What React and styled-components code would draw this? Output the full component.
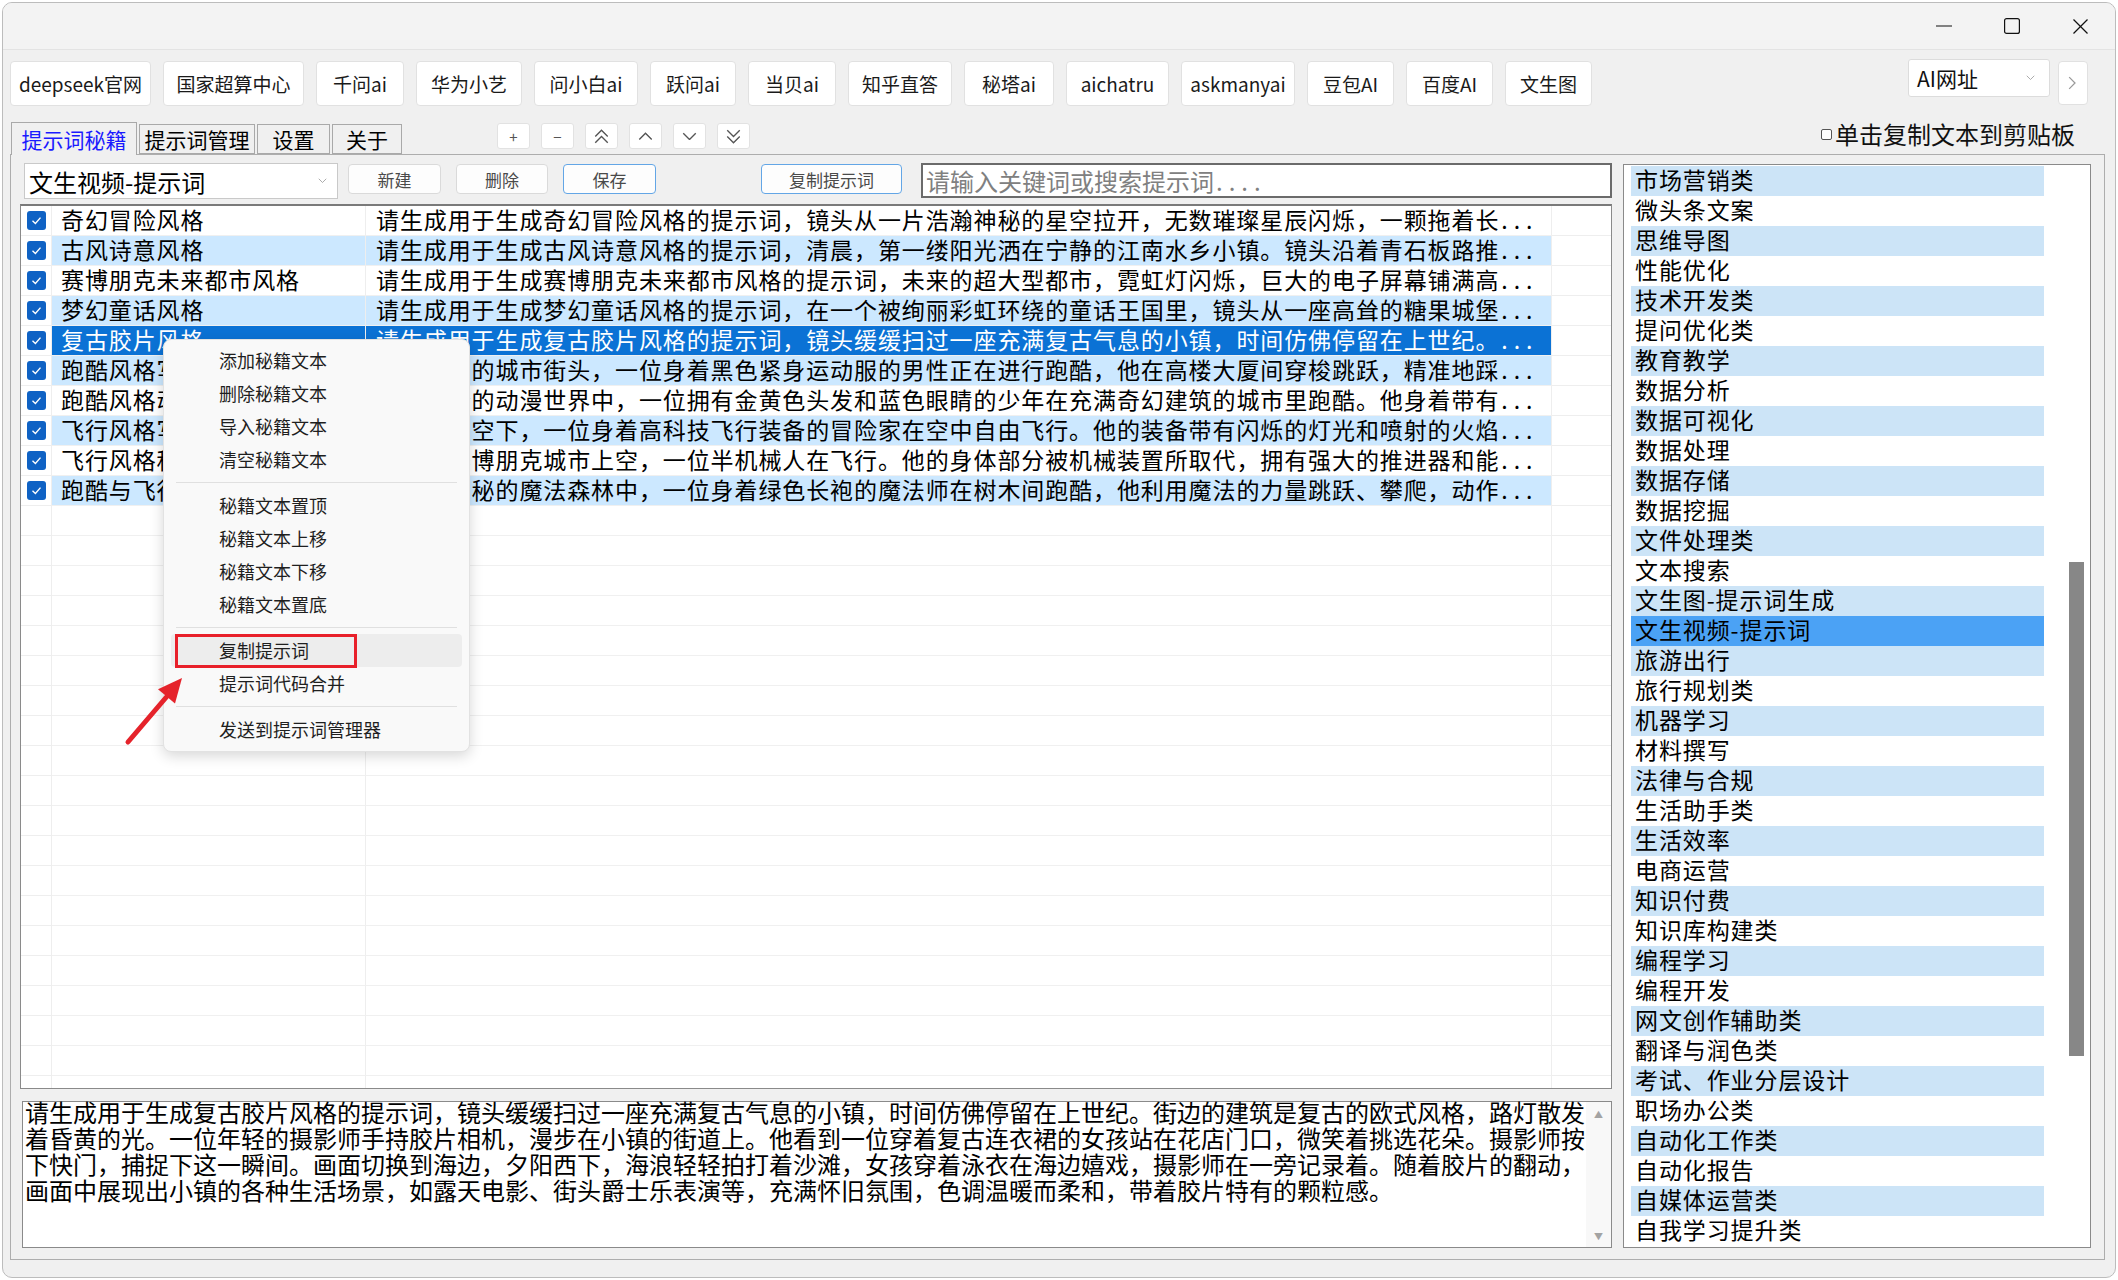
import React from "react";
import styled, { createGlobalStyle } from "styled-components";

const GlobalStyle = createGlobalStyle`
  html, body {
    margin: 0;
    padding: 0;
    background: #ffffff;
  }
  body {
    font-family: "Noto Sans CJK SC", "Noto Sans", "Liberation Sans", sans-serif;
    color: #000;
  }
  * {
    box-sizing: border-box;
  }
`;

const sites = [
  { label: "deepseek官网", w: 141 },
  { label: "国家超算中心", w: 141 },
  { label: "千问ai", w: 88 },
  { label: "华为小艺", w: 106 },
  { label: "问小白ai", w: 104 },
  { label: "跃问ai", w: 86 },
  { label: "当贝ai", w: 88 },
  { label: "知乎直答", w: 104 },
  { label: "秘塔ai", w: 90 },
  { label: "aichatru", w: 103 },
  { label: "askmanyai", w: 114 },
  { label: "豆包AI", w: 87 },
  { label: "百度AI", w: 87 },
  { label: "文生图", w: 87 }
];

const tabs = [
  { label: "提示词秘籍", width: 126, active: true },
  { label: "提示词管理", width: 116 },
  { label: "设置", width: 73 },
  { label: "关于", width: 70 }
];

const prompts = [
  ["奇幻冒险风格", "请生成用于生成奇幻冒险风格的提示词，镜头从一片浩瀚神秘的星空拉开，无数璀璨星辰闪烁，一颗拖着长"],
  ["古风诗意风格", "请生成用于生成古风诗意风格的提示词，清晨，第一缕阳光洒在宁静的江南水乡小镇。镜头沿着青石板路推"],
  ["赛博朋克未来都市风格", "请生成用于生成赛博朋克未来都市风格的提示词，未来的超大型都市，霓虹灯闪烁，巨大的电子屏幕铺满高"],
  ["梦幻童话风格", "请生成用于生成梦幻童话风格的提示词，在一个被绚丽彩虹环绕的童话王国里，镜头从一座高耸的糖果城堡"],
  ["复古胶片风格", "请生成用于生成复古胶片风格的提示词，镜头缓缓扫过一座充满复古气息的小镇，时间仿佛停留在上世纪。"],
  ["跑酷风格写实", "繁华喧嚣的城市街头，一位身着黑色紧身运动服的男性正在进行跑酷，他在高楼大厦间穿梭跳跃，精准地踩"],
  ["跑酷风格动漫", "色彩缤纷的动漫世界中，一位拥有金黄色头发和蓝色眼睛的少年在充满奇幻建筑的城市里跑酷。他身着带有"],
  ["飞行风格写实", "在蔚蓝天空下，一位身着高科技飞行装备的冒险家在空中自由飞行。他的装备带有闪烁的灯光和喷射的火焰"],
  ["飞行风格科幻", "在未来赛博朋克城市上空，一位半机械人在飞行。他的身体部分被机械装置所取代，拥有强大的推进器和能"],
  ["跑酷与飞行", "在一片神秘的魔法森林中，一位身着绿色长袍的魔法师在树木间跑酷，他利用魔法的力量跳跃、攀爬，动作"]
];

const SELECTED_ROW = 4;

const categories = [
  "市场营销类", "微头条文案", "思维导图", "性能优化", "技术开发类", "提问优化类",
  "教育教学", "数据分析", "数据可视化", "数据处理", "数据存储", "数据挖掘",
  "文件处理类", "文本搜索", "文生图-提示词生成", "文生视频-提示词", "旅游出行",
  "旅行规划类", "机器学习", "材料撰写", "法律与合规", "生活助手类", "生活效率",
  "电商运营", "知识付费", "知识库构建类", "编程学习", "编程开发", "网文创作辅助类",
  "翻译与润色类", "考试、作业分层设计", "职场办公类", "自动化工作类", "自动化报告",
  "自媒体运营类", "自我学习提升类"
];

const SELECTED_CATEGORY = 15;

const detailLines = [
  "请生成用于生成复古胶片风格的提示词，镜头缓缓扫过一座充满复古气息的小镇，时间仿佛停留在上世纪。街边的建筑是复古的欧式风格，路灯散发",
  "着昏黄的光。一位年轻的摄影师手持胶片相机，漫步在小镇的街道上。他看到一位穿着复古连衣裙的女孩站在花店门口，微笑着挑选花朵。摄影师按",
  "下快门，捕捉下这一瞬间。画面切换到海边，夕阳西下，海浪轻轻拍打着沙滩，女孩穿着泳衣在海边嬉戏，摄影师在一旁记录着。随着胶片的翻动，",
  "画面中展现出小镇的各种生活场景，如露天电影、街头爵士乐表演等，充满怀旧氛围，色调温暖而柔和，带着胶片特有的颗粒感。"
];

const menuGroups = [
  ["添加秘籍文本", "删除秘籍文本", "导入秘籍文本", "清空秘籍文本"],
  ["秘籍文本置顶", "秘籍文本上移", "秘籍文本下移", "秘籍文本置底"],
  ["复制提示词", "提示词代码合并"],
  ["发送到提示词管理器"]
];

const Chevron = ({ dir = "down", size = 10, color = "#8a8a8a", double }) => {
  const pts = dir === "up" ? "1,6 6,1 11,6" : dir === "down" ? "1,1 6,6 11,1" : "1,1 6,6 1,11";
  const w = dir === "right" ? 8 : 12;
  const h = dir === "right" ? 12 : double ? 12 : 7;
  return (
    <svg width={size * (w / 12)} height={size * (h / 12)} viewBox={`0 0 ${w} ${h}`}>
      <polyline points={pts} fill="none" stroke={color} strokeWidth="1.1" />
      {double && (
        <polyline
          points={dir === "up" ? "1,11 6,6 11,11" : "1,6 6,11 11,6"}
          fill="none"
          stroke={color}
          strokeWidth="1.1"
        />
      )}
    </svg>
  );
};

const App = () => {
  const emptyRows = Array.from({ length: 20 });
  return (
    <>
      <GlobalStyle />
      <Window>
        <TitleBar>
          <WinControl>
            <svg width="16" height="2" viewBox="0 0 16 2">
              <line x1="0" y1="1" x2="16" y2="1" stroke="#111" strokeWidth="1.2" />
            </svg>
          </WinControl>
          <WinControl>
            <svg width="16" height="16" viewBox="0 0 16 16">
              <rect x="0.6" y="0.6" width="14.8" height="14.8" rx="2" fill="none" stroke="#111" strokeWidth="1.2" />
            </svg>
          </WinControl>
          <WinControl>
            <svg width="15" height="15" viewBox="0 0 15 15">
              <line x1="0.5" y1="0.5" x2="14.5" y2="14.5" stroke="#111" strokeWidth="1.2" />
              <line x1="14.5" y1="0.5" x2="0.5" y2="14.5" stroke="#111" strokeWidth="1.2" />
            </svg>
          </WinControl>
        </TitleBar>

        <SiteBar>
          {sites.map((s) => (
            <SiteButton key={s.label} $w={s.w}>
              {s.label}
            </SiteButton>
          ))}
          <RightGroup>
            <AddrCombo>
              <span>AI网址</span>
              <Chevron dir="down" size={9} color="#9a9a9a" />
            </AddrCombo>
            <NextButton>
              <Chevron dir="right" size={14} color="#9a9a9a" />
            </NextButton>
          </RightGroup>
        </SiteBar>

        <TabRow>
          {tabs.map((t) => (
            <Tab key={t.label} $active={t.active} $width={t.width}>
              {t.label}
            </Tab>
          ))}
          <MiniGroup>
            <MiniButton>+</MiniButton>
            <MiniButton>−</MiniButton>
            <MiniButton>
              <Chevron dir="up" double size={15} color="#555" />
            </MiniButton>
            <MiniButton>
              <Chevron dir="up" size={15} color="#555" />
            </MiniButton>
            <MiniButton>
              <Chevron dir="down" size={15} color="#555" />
            </MiniButton>
            <MiniButton>
              <Chevron dir="down" double size={15} color="#555" />
            </MiniButton>
          </MiniGroup>
          <ClipCheck>
            <SmallBox />
            单击复制文本到剪贴板
          </ClipCheck>
        </TabRow>

        <Panel>
          <LeftColumn>
            <Toolbar>
              <GroupCombo>
                <span>文生视频-提示词</span>
                <Chevron dir="down" size={9} color="#9a9a9a" />
              </GroupCombo>
              <ToolButton $ml={10} $w={93}>新建</ToolButton>
              <ToolButton $ml={15} $w={92}>删除</ToolButton>
              <ToolButton $ml={15} $w={93} $focus>保存</ToolButton>
              <ToolButton $ml={105} $w={141} $focus>复制提示词</ToolButton>
              <SearchBox>
                请输入关键词或搜索提示词<Dots>....</Dots>
              </SearchBox>
            </Toolbar>

            <Table>
              {prompts.map(([title, text], i) => {
                const tone = i === SELECTED_ROW ? "selected" : i % 2 === 1 ? "alt" : "plain";
                return (
                  <Row key={title}>
                    <CheckCell>
                      <CheckBox>
                        <svg width="13" height="13" viewBox="0 0 13 13">
                          <polyline points="2.5,6.8 5.4,9.5 10.5,3.6" fill="none" stroke="#fff" strokeWidth="1.4" />
                        </svg>
                      </CheckBox>
                    </CheckCell>
                    <TextCell $tone={tone} $pl={9}>{title}</TextCell>
                    <TextCell $tone={tone} $pl={10}>
                      {text}
                      <Dots>...</Dots>
                    </TextCell>
                    <FillCell />
                  </Row>
                );
              })}
              {emptyRows.map((_, i) => (
                <Row key={`e${i}`}>
                  <CheckCell />
                  <TextCell $tone="plain" />
                  <TextCell $tone="plain" />
                  <FillCell />
                </Row>
              ))}
            </Table>

            <DetailBox>
              <DetailText>
                {detailLines.map((l) => (
                  <DetailLine key={l}>{l}</DetailLine>
                ))}
              </DetailText>
              <DetailScroll>
                <ScrollArrow>▲</ScrollArrow>
                <ScrollArrow>▼</ScrollArrow>
              </DetailScroll>
            </DetailBox>
          </LeftColumn>

          <CategoryList>
            <CategoryItems>
              {categories.map((c, i) => (
                <CategoryItem
                  key={c}
                  $tone={i === SELECTED_CATEGORY ? "selected" : i % 2 === 0 ? "alt" : "plain"}
                >
                  {c}
                </CategoryItem>
              ))}
            </CategoryItems>
            <ScrollTrack>
              <ScrollThumb $top={397} $height={494} />
            </ScrollTrack>
          </CategoryList>
        </Panel>

        <ContextMenu>
          {menuGroups.map((group, gi) => (
            <React.Fragment key={gi}>
              {gi > 0 && <MenuSeparator />}
              {group.map((item) => (
                <MenuItem key={item} $hover={item === "复制提示词"}>
                  {item}
                  {item === "复制提示词" && <Highlight />}
                </MenuItem>
              ))}
            </React.Fragment>
          ))}
        </ContextMenu>

        <Arrow width="80" height="90" viewBox="0 0 80 90">
          <line x1="13" y1="77" x2="54" y2="29" stroke="#e5232b" strokeWidth="5" strokeLinecap="round" />
          <polygon points="67,13 60,38.5 43,24.3" fill="#e5232b" />
        </Arrow>
      </Window>
    </>
  );
};

const Window = styled.div`
  position: relative;
  margin: 2px 0 0 2px;
  width: 2114px;
  height: 1276px;
  border: 1px solid #bcbcbc;
  border-radius: 10px;
  background: #f0f0f0;
  overflow: hidden;
  display: flex;
  flex-direction: column;
`;

const TitleBar = styled.div`
  height: 47px;
  flex-shrink: 0;
  background: #f3f3f3;
  border-bottom: 1px solid #e3e3e3;
  display: flex;
  justify-content: flex-end;
  align-items: center;
  padding-right: 1px;
`;

const WinControl = styled.div`
  width: 68px;
  height: 46px;
  display: flex;
  align-items: center;
  justify-content: center;
`;

const SiteBar = styled.div`
  display: flex;
  align-items: flex-start;
  gap: 12px;
  height: 45px;
  margin-top: 11px;
  padding: 0 27px 0 7px;
  flex-shrink: 0;
`;

const SiteButton = styled.div`
  width: ${(p) => p.$w}px;
  height: 45px;
  display: flex;
  align-items: center;
  justify-content: center;
  background: #ffffff;
  border: 1px solid #e1e1e1;
  border-radius: 4px;
  font-size: 19px;
  color: #1a1a1a;
  white-space: nowrap;
`;

const RightGroup = styled.div`
  margin-left: auto;
  display: flex;
  align-items: flex-start;
  gap: 8px;
`;

const AddrCombo = styled.div`
  width: 142px;
  height: 38px;
  margin-top: -2px;
  padding: 0 14px 0 8px;
  display: flex;
  align-items: center;
  justify-content: space-between;
  background: #ffffff;
  border: 1px solid #dcdcdc;
  border-radius: 3px;
  font-size: 21px;
  color: #111;
`;

const NextButton = styled.div`
  width: 30px;
  height: 44px;
  display: flex;
  align-items: center;
  justify-content: center;
  background: #ffffff;
  border: 1px solid #e1e1e1;
  border-radius: 4px;
`;

const TabRow = styled.div`
  position: relative;
  z-index: 1;
  display: flex;
  align-items: flex-end;
  height: 32px;
  margin-top: 16px;
  padding: 0 40px 0 8px;
  flex-shrink: 0;
`;

const Tab = styled.div`
  width: ${(p) => p.$width}px;
  height: ${(p) => (p.$active ? 33 : 30)}px;
  margin-bottom: ${(p) => (p.$active ? -1 : 0)}px;
  margin-right: 2px;
  display: flex;
  align-items: center;
  justify-content: center;
  background: #f0f0f0;
  border: 1px solid #a9a9a9;
  border-bottom: ${(p) => (p.$active ? "none" : "1px solid #a9a9a9")};
  font-size: 21px;
  color: ${(p) => (p.$active ? "#1a1aff" : "#000")};
  white-space: nowrap;
`;

const MiniGroup = styled.div`
  align-self: flex-start;
  margin: 1px 0 0 93px;
  display: flex;
  gap: 11px;
`;

const MiniButton = styled.div`
  width: 33px;
  height: 26px;
  display: flex;
  align-items: center;
  justify-content: center;
  background: #ffffff;
  border: 1px solid #e2e2e2;
  border-radius: 3px;
  font-size: 15px;
  color: #555;
`;

const ClipCheck = styled.div`
  margin-left: auto;
  align-self: flex-start;
  display: flex;
  align-items: center;
  gap: 3px;
  font-size: 24px;
  line-height: 24px;
  color: #111;
  white-space: nowrap;
`;

const SmallBox = styled.span`
  width: 11px;
  height: 11px;
  border: 1px solid #555;
  border-radius: 2px;
  background: #fff;
`;

const Panel = styled.div`
  height: 1106px;
  width: 2095px;
  margin-left: 7px;
  display: flex;
  gap: 11px;
  padding: 8px 13px 10px 9px;
  border: 1px solid #adadad;
  flex-shrink: 0;
`;

const LeftColumn = styled.div`
  width: 1592px;
  display: flex;
  flex-direction: column;
`;

const Toolbar = styled.div`
  height: 37px;
  display: flex;
  align-items: flex-start;
  padding-left: 4px;
`;

const GroupCombo = styled.div`
  width: 314px;
  height: 36px;
  padding: 0 10px 0 4px;
  display: flex;
  align-items: center;
  justify-content: space-between;
  background: #ffffff;
  border: 1px solid #c9c9c9;
  font-size: 24px;
  color: #000;
`;

const ToolButton = styled.div`
  width: ${(p) => p.$w}px;
  height: 30px;
  margin: 1px 0 0 ${(p) => p.$ml}px;
  display: flex;
  align-items: center;
  justify-content: center;
  background: #fdfdfd;
  border: 1px solid ${(p) => (p.$focus ? "#63a6e6" : "#dadada")};
  border-radius: 4px;
  font-size: 17px;
  color: #4a4a4a;
`;

const SearchBox = styled.div`
  flex: 1;
  height: 35px;
  margin-left: 19px;
  padding-left: 3px;
  display: flex;
  align-items: center;
  background: #ffffff;
  border: 2px solid #6b6b6b;
  font-size: 24px;
  color: #808080;
  white-space: nowrap;
`;

const Table = styled.div`
  height: 885px;
  margin-top: 4px;
  background: #ffffff;
  border: 1px solid #8a8a8a;
  border-top: 2px solid #7a7a7a;
  overflow: hidden;
`;

const Row = styled.div`
  display: grid;
  grid-template-columns: 31px 314px 1186px 1fr;
  height: 30px;
`;

const toneBg = {
  plain: "#ffffff",
  alt: "#cce8ff",
  selected: "#0b72d5"
};

const CheckCell = styled.div`
  display: flex;
  align-items: center;
  justify-content: center;
  border-right: 1px solid #eeeeee;
  border-bottom: 1px solid #eeeeee;
`;

const CheckBox = styled.div`
  width: 19px;
  height: 19px;
  border-radius: 3px;
  background: #0f62c4;
  display: flex;
  align-items: center;
  justify-content: center;
`;

const TextCell = styled.div`
  padding-left: ${(p) => p.$pl || 0}px;
  background: ${(p) => toneBg[p.$tone]};
  color: ${(p) => (p.$tone === "selected" ? "#ffffff" : "#000000")};
  border-right: 1px solid #eeeeee;
  border-bottom: 1px solid #f0f0f0;
  font-size: 23px;
  letter-spacing: 0.9px;
  line-height: 26px;
  white-space: nowrap;
`;

const Dots = styled.span`
  margin-left: 2px;
  letter-spacing: 6px;
`;

const FillCell = styled.div`
  border-bottom: 1px solid #eeeeee;
`;

const DetailBox = styled.div`
  height: 147px;
  margin: 12px 0 0 2px;
  display: flex;
  background: #ffffff;
  border: 1px solid #8a8a8a;
`;

const DetailText = styled.div`
  flex: 1;
  padding: 0 0 0 2px;
  margin-top: -3px;
  font-size: 24px;
  line-height: 26px;
  color: #000;
`;

const DetailLine = styled.div`
  white-space: nowrap;
`;

const DetailScroll = styled.div`
  width: 25px;
  display: flex;
  flex-direction: column;
  justify-content: space-between;
  align-items: center;
  padding: 6px 0 4px;
  background: #f8f8f8;
`;

const ScrollArrow = styled.span`
  font-size: 9px;
  color: #a3a3a3;
`;

const CategoryList = styled.div`
  width: 468px;
  height: 1084px;
  margin-top: 1px;
  display: flex;
  background: #ffffff;
  border: 1px solid #8a8a8a;
`;

const CategoryItems = styled.div`
  flex: 1;
  padding: 1px 20px 0 7px;
`;

const catBg = {
  plain: "#ffffff",
  alt: "#cce4f7",
  selected: "#4ba2f5"
};

const CategoryItem = styled.div`
  height: 30px;
  line-height: 27px;
  padding-left: 4px;
  background: ${(p) => catBg[p.$tone]};
  font-size: 23px;
  letter-spacing: 0.9px;
  color: #000;
  white-space: nowrap;
`;

const ScrollTrack = styled.div`
  width: 26px;
  padding-left: 5px;
`;

const ScrollThumb = styled.div`
  width: 15px;
  margin-top: ${(p) => p.$top}px;
  height: ${(p) => p.$height}px;
  background: #878787;
`;

const ContextMenu = styled.div`
  position: absolute;
  left: 160px;
  top: 336px;
  width: 307px;
  padding: 4px 0 5px;
  background: #f9f9f9;
  border: 1px solid #e2e2e2;
  border-radius: 8px;
  box-shadow: 0 4px 14px rgba(0, 0, 0, 0.16);
  z-index: 5;
`;

const MenuItem = styled.div`
  position: relative;
  height: 33px;
  margin: 0 7px;
  padding: 0 0 2px 48px;
  display: flex;
  align-items: center;
  border-radius: 4px;
  background: ${(p) => (p.$hover ? "#ededed" : "transparent")};
  font-size: 18px;
  color: #1f1f1f;
  white-space: nowrap;
`;

const MenuSeparator = styled.div`
  height: 13px;
  margin: 0 12px;
  display: flex;
  align-items: center;
  &::after {
    content: "";
    flex: 1;
    height: 1px;
    background: #e0e0e0;
  }
`;

const Highlight = styled.div`
  position: absolute;
  left: 4px;
  top: 0;
  width: 182px;
  height: 34px;
  border: 3px solid #e8202a;
`;

const Arrow = styled.svg`
  position: absolute;
  left: 112px;
  top: 662px;
  z-index: 6;
`;

export default App;
